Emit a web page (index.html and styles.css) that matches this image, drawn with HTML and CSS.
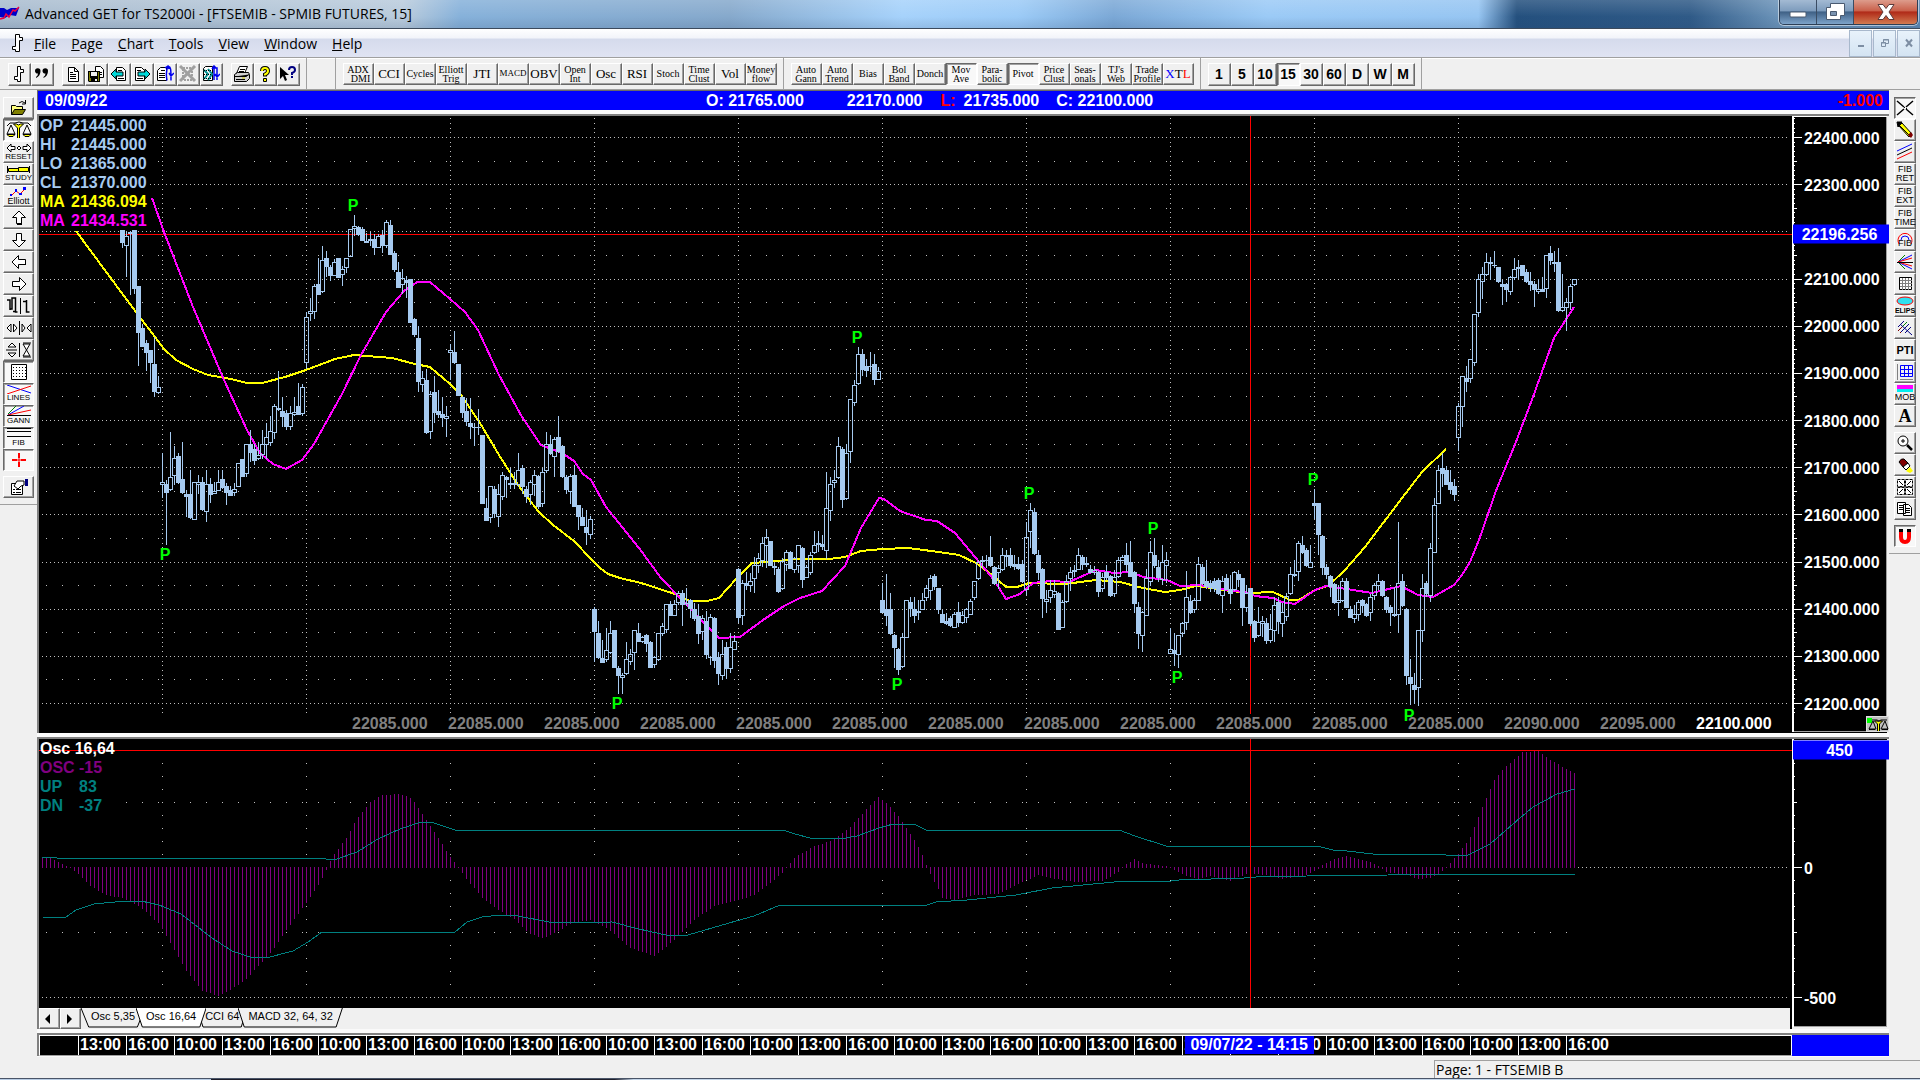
FILE: index.html
```html
<!DOCTYPE html>
<html lang="en">
<head>
    <meta charset="UTF-8">
    <meta name="viewport" content="width=device-width, initial-scale=1.0">
    <title>Advanced GET for TS2000i - [FTSEMIB - SPMIB FUTURES, 15]</title>
    <link rel="stylesheet" href="styles.css">
</head>
<body>
    <header class="titlebar">
        <svg class="app-icon" width="20" height="16" viewBox="0 0 20 16"><path fill="#0000c8" d="M0 2l4 0 3 2 4-2 8 0-3 8-6-1-5 3-5-1z"/><path fill="none" stroke="#f00040" stroke-width="1.500" d="M0 13l4-1 2-4 3 3 4-7 2 1 4-4"/></svg>
        <h1>Advanced GET for TS2000i - [FTSEMIB - SPMIB FUTURES, 15]</h1>
        <div class="window-buttons">
            <button class="win-min" aria-label="Minimize"><svg width="18" height="14" viewBox="0 0 18 14"><rect x="1" y="7" width="16" height="5" rx="1" fill="#fff" stroke="#4a5a70"/></svg></button>
            <button class="win-max" aria-label="Restore"><svg width="20" height="18" viewBox="0 0 20 18"><path fill="#fff" stroke="#4a5a70" d="M5.500.5h14v12h-4v4h-14v-12h4z"/><path fill="#7a93b0" stroke="#4a5a70" d="M5.500 8.500h6v4h-6z"/></svg></button>
            <button class="win-close" aria-label="Close"><svg width="20" height="16" viewBox="0 0 20 16"><path fill="#fff" stroke="#5a3a3a" d="M2 .5h5l3 4 3-4h5l-5 7.500 5 7.500h-5l-3-4-3 4H2l5-7.500z"/></svg></button>
        </div>
    </header>

    <nav class="menubar">
        <svg class="doc-icon" width="12" height="20" viewBox="0 0 12 20"><path fill="#fff" stroke="#000" d="M4.500 1.500h4v3h3v3h-3v11h-4v-2h-3v-3h3z"/></svg>
        <a href="#"><u>F</u>ile</a>
        <a href="#"><u>P</u>age</a>
        <a href="#"><u>C</u>hart</a>
        <a href="#"><u>T</u>ools</a>
        <a href="#"><u>V</u>iew</a>
        <a href="#"><u>W</u>indow</a>
        <a href="#"><u>H</u>elp</a>
        <div class="mdi-buttons">
            <button aria-label="Minimize chart"><svg width="10" height="10" viewBox="0 0 10 10"><path fill="#7d8ea3" d="M2 7h6v2H2z"/></svg></button>
            <button aria-label="Restore chart"><svg width="10" height="10" viewBox="0 0 10 10"><path fill="none" stroke="#7d8ea3" d="M3.500 4V1.500h5v4H6M1.500 4.500h4v4h-4zM3 2h6M1 5h5"/></svg></button>
            <button aria-label="Close chart"><svg width="10" height="10" viewBox="0 0 10 10"><path stroke="#7d8ea3" stroke-width="2" d="M2 1.500l6 7M8 1.500l-6 7"/></svg></button>
        </div>
    </nav>

    <div class="toolbar">
        <div class="group">
            <button class="tool" aria-label="New chart"><svg width="18" height="18" viewBox="0 0 18 18"><path fill="#fff" stroke="#000" d="M7.500 1.500h3v3h3v3h-3v9h-3v-2h-3v-3h3z"/></svg></button>
            <button class="tool" aria-label="Quotes"><svg width="18" height="18" viewBox="0 0 18 18"><path d="M2 6a2.500 2.500 0 1 1 5.500 0q0 5-4.500 7v-1q2-1.500 2-3.500A2.500 2.500 0 0 1 2 6zM9.500 6a2.500 2.500 0 1 1 5.500 0q0 5-4.500 7v-1q2-1.500 2-3.500A2.500 2.500 0 0 1 9.500 6z"/></svg></button>
        </div>
        <div class="group">
            <button class="tool" aria-label="New page"><svg width="18" height="18" viewBox="0 0 18 18"><path fill="#fff" stroke="#000" d="M4.500 2.500h6l4 4v10h-10zM10.500 2.500v4h4"/><path stroke="#000" d="M6 9.500h6M6 11.500h6M6 13.500h6M6 7.500h3"/></svg></button>
            <button class="tool" aria-label="Save page"><svg width="18" height="18" viewBox="0 0 18 18"><path fill="#fff" stroke="#000" d="M8.500 1.500h5l3 3v8h-8z"/><path stroke="#000" d="M12 7.500h3M12 9.500h3"/><path fill="#000" d="M1 6h12v11H2l-1-1z"/><path fill="#808000" d="M2 7h1v6h8V7h1v9h-1v-3H4v3H2z"/><path fill="#f0f0f0" d="M4 7h6v4H4zM8 14h2v2H8z"/></svg></button>
            <button class="tool" aria-label="Previous page"><svg width="18" height="18" viewBox="0 0 18 18"><path fill="#fff" stroke="#000" d="M6.500 2.500h6l3 3v10h-9z"/><path stroke="#000" d="M8 5.500h4M8 13.500h6"/><path fill="#00d8d8" stroke="#000" d="M1 9l5-5v3h7v4H6v3z"/></svg></button>
            <button class="tool" aria-label="Next page"><svg width="18" height="18" viewBox="0 0 18 18"><path fill="#fff" stroke="#000" d="M2.500 2.500h6l3 3v10h-9z"/><path stroke="#000" d="M4 5.500h4M4 13.500h6"/><path fill="#00d8d8" stroke="#000" d="M17 9l-5-5v3H5v4h7v3z"/></svg></button>
            <button class="tool" aria-label="Reload page"><svg width="18" height="18" viewBox="0 0 18 18"><path fill="#fff" stroke="#000" d="M1.500 5.500l3-3h6v13h-9z"/><path stroke="#000" d="M3 8.500h6M3 10.500h6M3 12.500h6M5 5.500h4"/><path fill="none" stroke="#0000f0" stroke-width="1.500" d="M11 15.500c-1-5-1-10 1-14 3 0 3 3 3 14M9 3l3-2 1 3M13 8l2 3 3-3"/></svg></button>
            <button class="tool" aria-label="Delete page" disabled><svg width="18" height="18" viewBox="0 0 18 18"><path fill="none" stroke="#a0a0a0" stroke-width="2" stroke-dasharray="2 1" d="M4 3h9v12H4z"/><path stroke="#a0a0a0" stroke-width="3" d="M1 1l15 15M16 1L1 16"/></svg></button>
            <button class="tool" aria-label="Reload all"><svg width="18" height="18" viewBox="0 0 18 18"><path fill="#fff" stroke="#000" d="M1.500 3.500l2-2h7v14h-9z"/><path fill="none" stroke="#009090" stroke-width="2" d="M2 5l4 4-4 5M6 4l4 5-4 6"/><path stroke="#000" stroke-dasharray="1 1" d="M2 5.500h8M2 9.500h8M2 13.500h8"/><path fill="none" stroke="#0000f0" stroke-width="1.500" d="M12 15V3h3v12M10 4l2-3 2 2M13 9l2 3 3-3"/></svg></button>
        </div>
        <div class="group">
            <button class="tool" aria-label="Print"><svg width="18" height="18" viewBox="0 0 18 18"><path fill="#fff" stroke="#000" d="M6.500 1.500h8l-3 7h-8z"/><path stroke="#000" d="M7 4.500h5M6 6.500h5"/><path fill="#d0d0d0" stroke="#000" d="M1.500 9.500l3-2h11l1 2v4l-3 3h-12z"/><path stroke="#000" d="M2 11.500h11l3-2M3 14.500h9"/><path stroke="#c8c800" d="M9 13h3"/></svg></button>
            <button class="tool" aria-label="Help"><svg width="18" height="18" viewBox="0 0 18 18"><path fill="none" stroke="#000" stroke-width="4" d="M6 6q0-3 3-3t3 3q0 2-3 3.500v2"/><path fill="none" stroke="#ffff00" stroke-width="2" d="M6 6q0-3 3-3t3 3q0 2-3 3.500v1"/><path fill="#ff0" stroke="#000" d="M7.500 13.500h3v3h-3z"/></svg></button>
            <button class="tool" aria-label="Context help"><svg width="18" height="18" viewBox="0 0 18 18"><path d="M1 2v12l3-3 2 5 2-1-2-5h4z"/><path fill="none" stroke="#000080" stroke-width="2" d="M10 5q0-3 3-3t3 3q0 2-3 3v2M13 11v2"/></svg></button>
        </div>
        <div class="group studies">
            <button class="study">ADX<br>&nbsp; DMI</button>
            <button class="study one">CCI</button>
            <button class="study">Cycles</button>
            <button class="study">Elliott<br>Trig</button>
            <button class="study one">JTI</button>
            <button class="study caps">MACD</button>
            <button class="study one">OBV</button>
            <button class="study">Open<br>Int</button>
            <button class="study one">Osc</button>
            <button class="study one">RSI</button>
            <button class="study">Stoch</button>
            <button class="study">Time<br>Clust</button>
            <button class="study one">Vol</button>
            <button class="study">Money<br>flow</button>
        </div>
        <div class="group">
            <button class="study">Auto<br>Gann</button>
            <button class="study">Auto<br>Trend</button>
            <button class="study">Bias</button>
            <button class="study">Bol<br>Band</button>
            <button class="study">Donch</button>
            <button class="study pressed">Mov<br>Ave</button>
            <button class="study">Para-<br>bolic</button>
            <button class="study pressed">Pivot</button>
            <button class="study">Price<br>Clust</button>
            <button class="study">Seas-<br>onals</button>
            <button class="study">TJ's<br>Web</button>
            <button class="study">Trade<br>Profile</button>
            <button class="study one"><span class="blue">X</span>T<span class="red">L</span></button>
        </div>
        <div class="group periods">
            <button class="tool">1</button>
            <button class="tool">5</button>
            <button class="tool">10</button>
            <button class="tool pressed">15</button>
            <button class="tool">30</button>
            <button class="tool">60</button>
            <button class="tool">D</button>
            <button class="tool">W</button>
            <button class="tool">M</button>
        </div>
    </div>

    <main class="workspace">
        <div class="side side-left">
            <button aria-label="Open"><svg width="26" height="18" viewBox="0 0 26 18"><path fill="#ffff80" stroke="#000" d="M5.500 15.500v-9h4l1 1h6v3"/><path fill="#808000" stroke="#000" d="M5.500 15.500l3-5h11l-3 5z"/><path fill="none" stroke="#000" d="M13 4q3-3 6 0M19.500 1v4H16"/></svg></button>
            <button class="pressed" aria-label="Scales"><svg width="26" height="18" viewBox="0 0 26 18"><path fill="none" stroke="#000" d="M1 5l3-3h5l4-1 4 1h5l3 3M5 4l-4 9h8zM21 4l-4 9h8z"/><path fill="#ff0" stroke="#000" d="M11.500 17V7l-4-4h3l2 1 2-1h3l-4 4v10M1 13.500h8l-2 2H3zM17 13.500h8l-2 2h-4z"/></svg></button>
            <button aria-label="Reset"><svg width="26" height="10" viewBox="0 0 26 10"><path fill="#fff" stroke="#000" d="M1 5l4-4v2.500h4v3H5V9zM25 5l-4-4v2.500h-4v3h4V9zM11 5l2-2 2 2-2 2z"/></svg><span>RESET</span></button>
            <button aria-label="Study"><svg width="26" height="9" viewBox="0 0 26 9"><path fill="#ff0" stroke="#000" d="M2.500 3.500h10v3h-10zM12.500 2.500h10v4h-10zM1.500 1v7M23.500 1v7"/></svg><span>STUDY</span></button>
            <button aria-label="Elliott"><svg width="26" height="10" viewBox="0 0 26 10"><path fill="none" stroke="red" d="M5 9l5-5 4 3 5-5"/><path fill="#00f" d="M4 7h2v2H4zM9 2h2v3H9zM13 6h3v2h-3zM17 0h3v3h-3z"/></svg><span class="mixed">Elliott</span></button>
            <button aria-label="Up"><svg width="18" height="18" viewBox="0 0 18 18"><path fill="#fff" stroke="#000" d="M9 2l6.500 6.500h-4v6h-5v-6h-4z"/><path d="M7 14h5v2H7zM11 9h1v6h-1z"/></svg></button>
            <button aria-label="Down"><svg width="18" height="18" viewBox="0 0 18 18"><path fill="#fff" stroke="#000" d="M9 16l6.500-6.500h-4v-7h-5v7h-4z"/><path d="M11 3h1v6h-1z"/></svg></button>
            <button aria-label="Left"><svg width="18" height="18" viewBox="0 0 18 18"><path fill="#fff" stroke="#000" d="M2 9l6.500-6.500v4h7v5h-7v4z"/><path d="M9 11h7v1H9z"/></svg></button>
            <button aria-label="Right"><svg width="18" height="18" viewBox="0 0 18 18"><path fill="#fff" stroke="#000" d="M16 9L9.500 2.500v4h-7v5h7v4z"/><path d="M3 11h7v1H3z"/></svg></button>
            <button aria-label="Bar spacing"><svg width="26" height="18" viewBox="0 0 26 18"><path fill="none" stroke="#000" stroke-width="1.500" d="M1 3h3v9h2v-11h3.500v14h2M4 4v9M7 14.500h3M17 4.500h3M20.500 3v12h3"/><path stroke="#000" d="M14.500 1v16"/></svg></button>
            <button aria-label="Width"><svg width="26" height="18" viewBox="0 0 26 18"><path fill="#fff" stroke="#000" d="M1 9l4-4v8zM11 9L7.500 5v8zM19 9l-3-4v8zM21 9l4-4v8zM13.500 2v14"/></svg></button>
            <button aria-label="Height"><svg width="26" height="18" viewBox="0 0 26 18"><path fill="#fff" stroke="#000" d="M2 6l4-4 4 4zM2 12l4 4 4-4zM0 9h11M13.500 2v14M17 3h7l-7 12h7zM17 2h8M17 16h8"/></svg></button>
            <button class="pressed" aria-label="Grid"><svg width="18" height="16" viewBox="0 0 18 16"><path fill="#fff" stroke="#000" d="M1.500.5h15v15h-15z"/><path stroke="#000" stroke-dasharray="1 2" d="M3 3.500h13M3 6.500h13M3 9.500h13M3 12.500h13"/></svg></button>
            <button class="pressed" aria-label="Lines"><svg width="26" height="9" viewBox="0 0 26 9"><path stroke="#00f" d="M1 0l24 8"/><path stroke="red" d="M1 9L25 1"/></svg><span>LINES</span></button>
            <button class="pressed" aria-label="Gann"><svg width="26" height="11" viewBox="0 0 26 11"><path stroke="green" d="M2 8l8-8"/><path stroke="#00f" d="M2 9l16-9"/><path stroke="red" d="M2 9l23-5"/><path stroke="#000" d="M1 9.500h24"/></svg><span>GANN</span></button>
            <button class="pressed" aria-label="Fib"><svg width="26" height="11" viewBox="0 0 26 11"><path stroke="#000" d="M1 .5h24M1 3.500h24M1 8.500h24"/></svg><span>FIB</span></button>
            <button class="pressed" aria-label="Crosshair"><svg width="18" height="18" viewBox="0 0 18 18"><path stroke="red" stroke-width="2" d="M2 9h5M11 9h5M9 2v5M9 11v5"/><path stroke="red" d="M7 9h4M9 7v4"/></svg></button>
            <hr>
            <button aria-label="Properties"><svg width="20" height="18" viewBox="0 0 20 18"><path fill="#fff" stroke="#000" d="M2.500 5.500h11v11h-11z"/><path stroke="#000" d="M4 11.500h2M7 11.500h5M4 14.500h2M7 14.500h5"/><path fill="#fff" stroke="#000" d="M5 8l3-5h7v4l-3 1-3 3z"/><path fill="#000080" d="M16 1h3v7h-3z"/></svg></button>
        </div>

        <div class="charts">
            <div class="quote">
                <span class="date">09/09/22</span>
                <span>O: 21765.000</span>
                <span class="high">22170.000</span>
                <span class="low"><b class="red">L:</b>21735.000</span>
                <span class="close">C: 22100.000</span>
                <span class="change">-1.000</span>
            </div>

            <section class="panel">
                <div class="plot" id="price-plot">
                    <svg viewBox="39 116 1753 617" preserveAspectRatio="none" shape-rendering="crispEdges"></svg>
                    <dl class="legend">
                        <dt>OP</dt><dd>21445.000</dd>
                        <dt>HI</dt><dd>21445.000</dd>
                        <dt>LO</dt><dd>21365.000</dd>
                        <dt>CL</dt><dd>21370.000</dd>
                        <dt class="yellow">MA</dt><dd class="yellow">21436.094</dd>
                        <dt class="magenta">MA</dt><dd class="magenta">21434.531</dd>
                    </dl>
                </div>
                <div class="axis" id="price-axis">
                    <svg viewBox="0 116 97 617" preserveAspectRatio="none" shape-rendering="crispEdges"></svg>
                    <button class="scale-lock" aria-label="Scale lock"><svg width="22" height="15" viewBox="0 0 22 15"><path fill="#0f0" d="M0 1h5v5H0z"/><path fill="none" stroke="#000" d="M5 3h5l2 1 2-1h6M6 4l-4 8h7zM18 4l-4 8h7z"/><path fill="#ff0" stroke="#000" d="M10.500 14V7l-3-3h3l1 1 1-1h3l-3 3v7M2 12.500h6M15 12.500h6"/></svg></button>
                </div>
            </section>

            <section class="panel">
                <div class="stack">
                    <div class="plot" id="osc-plot">
                        <svg viewBox="39 739 1753 269" preserveAspectRatio="none" shape-rendering="crispEdges"></svg>
                        <dl class="legend osc-legend">
                            <dt class="white wide">Osc 16,64</dt>
                            <dt class="purple">OSC</dt><dd class="purple">-15</dd>
                            <dt class="teal">UP</dt><dd class="teal">83</dd>
                            <dt class="teal">DN</dt><dd class="teal">-37</dd>
                        </dl>
                    </div>
                    <div class="tabs">
                        <button class="scroll" aria-label="Scroll left"><svg width="8" height="10" viewBox="0 0 8 10"><path d="M6 0v10L1 5z"/></svg></button>
                        <button class="scroll" aria-label="Scroll right"><svg width="8" height="10" viewBox="0 0 8 10"><path d="M2 0v10l5-5z"/></svg></button>
                        <button class="tab"><svg viewBox="0 0 100 20" preserveAspectRatio="none"><path d="M0 0l12 19h76L100 0"/></svg>Osc 5,35</button>
                        <button class="tab active"><svg viewBox="0 0 100 20" preserveAspectRatio="none"><path d="M0 0l9 19h82L100 0"/></svg>Osc 16,64</button>
                        <button class="tab short"><svg viewBox="0 0 100 20" preserveAspectRatio="none"><path d="M0 0l12 19h76L100 0"/></svg>CCI 64</button>
                        <button class="tab"><svg viewBox="0 0 100 20" preserveAspectRatio="none"><path d="M0 0l6 19h88L100 0"/></svg>MACD 32, 64, 32</button>
                    </div>
                </div>
                <div class="axis" id="osc-axis">
                    <svg viewBox="0 739 97 290" preserveAspectRatio="none" shape-rendering="crispEdges"></svg>
                </div>
            </section>

            <div class="timebar">
                <div class="times" id="times">
                    <span class="cursor-time">09/07/22 - 14:15</span>
                </div>
                <div class="time-corner"></div>
            </div>
        </div>

        <div class="side side-right">
            <button class="pressed" aria-label="Cross tool"><svg width="18" height="18" viewBox="0 0 18 18"><path stroke="#000" stroke-width="1.500" d="M1 2l7 6M17 2l-7 6M1 16l7-6M17 16l-7-6"/><path d="M8 8h1v1H8zM10 9h1v1h-1z"/></svg></button>
            <button aria-label="Pencil"><svg width="18" height="18" viewBox="0 0 18 18"><path fill="#ff0" stroke="#000" d="M3 5l3-3 10 11-3 3z"/><path d="M1 1h5L2 6zM4 5l9 9" stroke="#000"/><path fill="#800000" d="M12 14l3-3 2 3-2 3z"/></svg></button>
            <button aria-label="Parallel lines"><svg width="18" height="18" viewBox="0 0 18 18"><path stroke="#00f" d="M1 8l15-7"/><path stroke="#000" d="M1 12l15-7"/><path stroke="red" d="M1 16l15-7"/></svg></button>
            <button class="label">FIB<br>RET</button>
            <button class="label">FIB<br>EXT</button>
            <button class="label">FIB<br>TIME</button>
            <button class="label" aria-label="Fib circle"><svg width="18" height="18" viewBox="0 0 18 18"><path fill="none" stroke="red" d="M3 13a7 7 0 1 1 12 0"/><path fill="none" stroke="#00f" d="M5 9a4 4 0 0 1 8 0"/></svg><span class="over">FIB</span></button>
            <button aria-label="Gann fan"><svg width="18" height="18" viewBox="0 0 18 18"><path stroke="green" d="M2 9l7-7M2 9l7 7"/><path stroke="#00f" d="M2 9l14-7M2 9l14 7"/><path stroke="red" d="M2 9l14-4M2 9l14 4"/><path stroke="#000" d="M1 9.500h16"/></svg></button>
            <button aria-label="Gann box"><svg width="18" height="18" viewBox="0 0 18 18"><path fill="#fff" stroke="#000" d="M3.500 2.500h12v12h-12z"/><path stroke="#808080" d="M6.500 3v12M9.500 3v12M12.500 3v12M4 5.500h12M4 8.500h12M4 11.500h12"/></svg></button>
            <button class="label" aria-label="Ellipse"><svg width="18" height="10" viewBox="0 0 18 10"><ellipse cx="9" cy="5" rx="8" ry="4" fill="#30e0f0" stroke="red"/></svg><b>ELIPS</b></button>
            <button aria-label="Pitchfork"><svg width="18" height="18" viewBox="0 0 18 18"><path stroke="#800000" d="M2 12l6-6M4 14l2-2"/><path stroke="green" d="M6 8l5-5"/><path stroke="#000080" d="M8 2l-6 6M13 5l-8 8M4 5l12 11M15 8l-6 6"/></svg></button>
            <button class="pti">PTI</button>
            <button aria-label="Price grid"><svg width="18" height="18" viewBox="0 0 18 18"><path fill="none" stroke="#00f" d="M4.500 2.500h12v11h-12zM8.500 3v11M12.500 3v11M5 6.500h12M5 10.500h12"/><path stroke="#808080" d="M1.500 1v16M4 16.500h13"/></svg></button>
            <button class="label" aria-label="Make or break"><svg width="18" height="8" viewBox="0 0 18 8"><path fill="#f0f" d="M1 0h16v4H1z"/><path fill="#0ee" d="M1 4h16v3H1z"/></svg>MOB</button>
            <button class="text-tool">A</button>
            <hr>
            <button aria-label="Zoom"><svg width="18" height="18" viewBox="0 0 18 18"><circle cx="7" cy="7" r="5" fill="#fff" stroke="#000"/><path stroke="#000" d="M5 7h4M7 5v4"/><path stroke="#000" stroke-width="2.500" d="M11 11l5 5"/></svg></button>
            <button aria-label="Eraser"><svg width="18" height="18" viewBox="0 0 18 18"><path fill="#800000" stroke="#000" d="M3 6q2-4 5-3l4 4-5 4z"/><path fill="#fff" stroke="#000" d="M7 11l5-4 2 3-4 4z"/><path fill="#ff0" d="M10 15l4-4 3 4-3 2z"/></svg></button>
            <button aria-label="Arrange"><svg width="18" height="18" viewBox="0 0 18 18"><path fill="#fff" stroke="#000" stroke-dasharray="3 1" d="M1.500 1.500h7v7h-7zM9.500 1.500h7v7h-7zM1.500 9.500h7v7h-7zM9.500 9.500h7v7h-7z"/><path stroke="#000" d="M3 3l4 4M15 3l-4 4M3 15l4-4M15 15l-4-4"/></svg></button>
            <button aria-label="Copy"><svg width="18" height="18" viewBox="0 0 18 18"><path fill="#fff" stroke="#000" d="M1.500 2.500h8v11h-8zM7.500 4.500h5l3 3v8h-8z"/><path stroke="#000" d="M3 5.500h4M3 7.500h4M3 9.500h4M9 8.500h5M9 10.500h5M9 12.500h5"/></svg></button>
            <hr>
            <button class="pressed" aria-label="Magnet"><svg width="18" height="18" viewBox="0 0 18 18"><path fill="none" stroke="red" stroke-width="4" d="M5 5v5q0 5 4 5t4-5V5"/><path d="M3 2h4v3H3zM11 2h4v3h-4z"/></svg></button>
        </div>
    </main>

    <footer class="statusbar"><span>Page: 1 - FTSEMIB B</span></footer>
    <div class="taskbar"></div>

    <script src="chart.js"></script>
</body>
</html>
```
FILE: styles.css
```css
* {
    box-sizing: border-box;
}

body {
    display: flex;
    flex-direction: column;
    min-height: 100vh;
    margin: 0;
    background: #f0f0f0;
    color: #000;
    font-family: "Liberation Sans", Arial, sans-serif;
}

button {
    display: flex;
    align-items: center;
    justify-content: center;
    margin: 0;
    padding: 0;
    color: #000;
    font-family: inherit;
}

svg {
    display: block;
    flex: none;
}

.red { color: #ff0000; }
.blue { color: #0000ff; }
.white { color: #ffffff; }
.yellow { color: #ffff00; }
.magenta { color: #ff00ff; }
.purple { color: #800080; }
.teal { color: #008080; }

/* title bar */
.titlebar {
    display: flex;
    align-items: center;
    height: 29px;
    border-bottom: 1px solid #3c4a5c;
    background:
        linear-gradient(rgba(255, 255, 255, 0.15), rgba(255, 255, 255, 0) 60%, rgba(40, 70, 110, 0.15)),
        linear-gradient(90deg, #a9bccf 0, #b9cbdc 21%, #86b1da 24%, #86a9cc 38%, #a6d2fb 47%, #9ccbf7 53%, #7ba8d6 58%, #9bcaf6 66%, #96c5f2 77%, #24507e 79%, #2f5a87 88%, #7098bd 93%, #5d88b2 100%);
}

.app-icon {
    margin-right: 5px;
}

.titlebar h1 {
    flex: 1;
    margin: 0;
    font-family: "Open Sans", "Noto Sans", sans-serif;
    font-size: 14px;
    font-weight: normal;
    line-height: 20px;
}

.window-buttons {
    display: flex;
    align-self: flex-start;
    height: 25px;
    margin-right: 2px;
    border: 1px solid #2c3e55;
    border-top: 0;
    border-radius: 0 0 5px 5px;
    box-shadow: 0 0 0 1px rgba(255, 255, 255, 0.5);
    overflow: hidden;
}

.window-buttons button {
    width: 37px;
    border: 0;
    border-right: 1px solid #3a4c63;
    background: linear-gradient(#a3bad3, #7e9cbd 45%, #3f6186 50%, #7da3c9);
}

.window-buttons .win-close {
    width: 63px;
    border-right: 0;
    background: linear-gradient(#dd9c8c, #c9604a 45%, #b02a18 50%, #d27a50);
}

/* menu */
.menubar {
    display: flex;
    align-items: center;
    height: 28px;
    padding-left: 11px;
    background: linear-gradient(#ffffff, #f2f4fa 32%, #d5dbec 36%, #e0e4f3);
    font-family: "Open Sans", "Noto Sans", sans-serif;
    font-size: 14px;
}

.doc-icon {
    margin-right: 11px;
}

.menubar a {
    margin-right: 15px;
    color: #000;
    text-decoration: none;
}

.mdi-buttons {
    display: flex;
    gap: 1px;
    height: 27px;
    margin-left: auto;
}

.mdi-buttons button {
    width: 23px;
    border: 1px solid #a8b8cc;
    background: linear-gradient(#e8f2fb, #d4e4f2);
}

/* top toolbar */
.toolbar {
    display: flex;
    height: 33px;
    padding-left: 8px;
    border-top: 1px solid #a0a0a0;
    border-bottom: 1px solid #a0a0a0;
    box-shadow: inset 0 1px #fff;
}

.group {
    display: flex;
    padding: 5px 8px 0 0;
}

.studies {
    margin-left: 28px;
    border-left: 1px solid #a0a0a0;
}

.group:nth-child(3) {
    padding-right: 6px;
    border-right: 1px solid #a0a0a0;
}

.group:nth-child(n+4) {
    padding-left: 7px;
    padding-right: 6px;
    border-right: 1px solid #a0a0a0;
}

.tool,
.study,
.side button,
.tabs .scroll {
    border: 1px solid;
    border-color: #fff #696969 #696969 #fff;
    background: #f0f0f0;
    box-shadow: inset -1px -1px #a0a0a0;
}

.tool.pressed,
.study.pressed,
.side button.pressed {
    border-color: #696969 #fff #fff #696969;
    background: #f8f8f8;
    box-shadow: inset 1px 1px #a0a0a0;
}

.tool {
    width: 23px;
    height: 23px;
    padding: 0 1px 1px 0;
}

.study {
    width: 31px;
    height: 22px;
    padding: 0 1px 1px 0;
    font-family: "Liberation Serif", "Times New Roman", serif;
    font-size: 10px;
    line-height: 9px;
    white-space: nowrap;
}

.study.one {
    font-size: 13px;
}

.study.caps {
    font-size: 9px;
}

.periods .tool {
    font-size: 14px;
    font-weight: bold;
}

/* workspace */
.workspace {
    display: flex;
    flex: 1;
}

.side {
    display: flex;
    flex-direction: column;
    flex: none;
    align-self: flex-start;
    padding-top: 7px;
    padding-bottom: 6px;
    border-bottom: 1px solid #a0a0a0;
}

.side-left {
    width: 37px;
    padding-left: 3px;
}

.side-right {
    width: 31px;
    padding-left: 5px;
}

.side button {
    position: relative;
    flex-direction: column;
    width: 31px;
    height: 22px;
    padding-bottom: 1px;
    font-size: 8px;
    line-height: 8px;
}

.side-right button {
    width: 22px;
}

.side hr {
    height: 5px;
    margin: 0;
    border: 0;
}

.side button.label {
    font-family: "Liberation Sans Narrow", "Liberation Sans", sans-serif;
    font-size: 9px;
    line-height: 9px;
}

.side button .mixed {
    font-size: 9px;
}

.side button .over {
    position: absolute;
    top: 9px;
}

.side button.label b {
    font-size: 7px;
}

.side button.pti {
    font-size: 11px;
    font-weight: bold;
}

.side button.text-tool {
    font-family: "Liberation Serif", serif;
    font-size: 18px;
    font-weight: bold;
}

.charts {
    display: grid;
    grid-template-rows: 20px 619fr 292fr 23px;
    gap: 4px;
    flex: 1;
    min-width: 0;
    padding-bottom: 1px;
    background: #fafafa;
    font-size: 16px;
    font-weight: bold;
    line-height: 19px;
}

.quote {
    display: flex;
    border-top: 1px solid #696969;
    border-left: 1px solid #696969;
    padding: 0 6px 0 7px;
    background: #0000ff;
    color: #fff;
}

.quote .date {
    flex: 0 0 661px;
}

.quote .high {
    margin-left: 43px;
}

.quote .low {
    margin-left: 18px;
}

.quote .low b {
    margin-right: 8px;
}

.quote .close {
    margin-left: 17px;
}

.quote .change {
    margin-left: auto;
    color: #ff0000;
}

.panel {
    display: flex;
    min-height: 0;
    border-top: 2px solid #808080;
    border-left: 2px solid #808080;
    background: #000;
}

.plot {
    position: relative;
    flex: 1;
    min-width: 0;
    background: #000;
}

.plot > svg,
.axis > svg {
    position: absolute;
    width: 100%;
    height: 100%;
}

.stack {
    display: flex;
    flex: 1;
    flex-direction: column;
    min-width: 0;
}

.legend {
    position: absolute;
    top: 0;
    left: 0;
    display: grid;
    grid-template-columns: 31px 79px;
    margin: 0;
    padding-left: 1px;
    background: #000;
    color: #a6caf0;
}

.legend dd {
    margin: 0;
}

.osc-legend {
    grid-template-columns: 39px 40px;
    background: none;
}

.osc-legend .wide {
    grid-column: span 2;
}

.pivot {
    position: absolute;
    color: #00ff00;
    transform: translate(-50%, -50%);
}

.projection {
    position: absolute;
    bottom: 0;
    color: #808080;
}

.projection.last {
    color: #fff;
}

.axis {
    position: relative;
    flex: 0 0 97px;
    background: #000;
    color: #fff;
}

.axis span {
    position: absolute;
    left: 12px;
    transform: translateY(-50%);
}

.axis .cursor-value {
    left: 1px;
    right: 0;
    padding-right: 3px;
    background: #0000ff;
    text-align: center;
}

.scale-lock {
    position: absolute;
    right: 0;
    bottom: 1px;
    width: 23px;
    height: 16px;
    border: 1px solid #e0e0e0;
    background: #c0c0c0;
}

/* study tabs */
.tabs {
    display: flex;
    height: 21px;
    margin-right: 2px;
    background: #f0f0f0;
    font-size: 11px;
}

.tabs .scroll {
    width: 21px;
    padding-right: 3px;
}

.tab {
    position: relative;
    z-index: 0;
    height: 20px;
    margin-right: -9px;
    padding: 0 10px 5px;
    border: 0;
    background: none;
    font-size: 11px;
}

.tab.short {
    padding: 0 8px 5px;
}

.tab svg {
    position: absolute;
    top: 0;
    left: 0;
    z-index: -1;
    width: 100%;
    height: 100%;
    fill: #f0f0f0;
    stroke: #000;
}

.tab path {
    vector-effect: non-scaling-stroke;
}

.tab.active {
    z-index: 1;
}

.tab.active svg {
    fill: #fff;
}

/* time axis */
.timebar {
    display: flex;
    border-top: 2px solid #808080;
    border-left: 2px solid #808080;
}

.times {
    position: relative;
    display: flex;
    flex: 1;
    min-width: 0;
    padding-left: 38px;
    border: 1px solid #fff;
    border-bottom-color: #a0a0a0;
    background: #000;
    color: #fff;
    line-height: 18px;
    overflow: hidden;
}

.times time {
    flex: 0 0 48px;
    padding-left: 1px;
    border-left: 1px solid #fff;
}

.cursor-time {
    position: absolute;
    top: 0;
    width: 129px;
    background: #0000ff;
    text-align: center;
    white-space: nowrap;
}

.time-corner {
    flex: 0 0 97px;
    background: #0000ff;
}

/* status bar */
.statusbar {
    display: flex;
    justify-content: flex-end;
    height: 21px;
    padding-top: 3px;
    font-family: "Open Sans", "Noto Sans", sans-serif;
    font-size: 14px;
    line-height: 18px;
}

.statusbar span {
    flex: 0 0 486px;
    padding-left: 1px;
    border-top: 1px solid #a0a0a0;
    border-left: 1px solid #a0a0a0;
}

.taskbar {
    height: 2px;
    border-top: 1px solid #4a5568;
    background: linear-gradient(90deg, #b8cce4 11%, #1c1c28 11%, #20202c 32%, #c4d6ea 33%);
}
```
FILE: chart.js
```js
const NS = 'http://www.w3.org/2000/svg';
const SESSION = 36;      // bars per day
const STEP = 4;          // px per bar
const FIRST_DAY = 162;   // x of the first full session

// one row per session, each bar: high open close low (chart y)
const sessions = [
    '230 230 242 248,232 245 236 277,231 233 232 295,230 230 288 294,286 286 332 366,324 328 346 347,340 343 352 371,350 350 362 383,337 364 391 397,376 392 387 394',
    '453 484 482 498,480 484 492 545,432 489 477 491,446 475 458 485,453 456 482 484,442 479 492 494,490 494 496 517,470 494 517 519,482 519 482 520,475 484 482 494,477 482 509 511,470 511 484 522,478 484 494 503,482 493 491 494,470 490 482 491,470 479 487 489,483 486 492 505,486 490 495 496,483 492 489 496,463 486 463 487,459 459 476 477,444 473 444 477,430 444 452 462,444 449 460 465,442 458 455 460,430 454 444 459,423 444 437 459,416 442 431 446,404 432 406 439,371 409 408 411,397 411 416 427,410 413 426 430,406 426 413 430,397 414 412 416,383 406 414 415,384 413 387 416',
    '312 362 317 369,298 313 311 321,284 311 286 319,258 284 294 295,246 291 260 293,251 258 266 277,265 267 275 281,259 275 262 276,258 258 277 278,266 274 269 286,258 267 258 273,229 256 229 257,215 228 226 236,226 227 234 236,227 229 240 241,233 242 241 243,232 239 240 246,234 239 247 255,234 247 236 248,230 235 245 253,220 245 222 248,220 225 254 255,251 253 269 272,262 272 287 288,269 284 278 294,276 280 282 298,279 279 322 323,318 319 334 337,326 338 381 392,371 384 378 392,369 380 432 434,391 431 394 439,376 392 412 423,390 411 414 418,397 414 417 427,406 418 416 437',
    '344 352 350 380,331 352 362 364,364 364 395 396,396 397 412 418,398 411 421 426,398 423 426 439,423 427 427 446,409 427 427 435,435 435 503 504,498 508 520 521,486 517 486 523,486 489 513 518,484 516 494 527,472 496 475 500,476 477 479 498,468 484 483 489,472 484 483 489,453 484 470 487,465 468 486 494,486 489 496 503,480 494 482 505,470 484 475 496,475 476 506 509,468 503 472 507,432 470 444 473,435 444 453 455,437 456 439 477,416 437 451 453,445 446 476 478,475 477 489 494,474 491 476 504,465 475 506 507,505 505 516 530,508 517 525 526,510 527 532 545,516 534 519 539',
    '607 609 631 662,621 633 657 659,640 658 662 663,628 659 650 662,621 652 633 654,630 630 667 668,666 668 675 694,673 677 675 694,642 673 659 675,649 661 654 665,630 652 630 670,623 633 641 641,636 641 637 643,634 635 643 652,641 642 667 668,656 664 657 668,633 659 633 661,623 633 626 636,604 629 604 633,601 604 615 616,600 615 604 616,591 602 593 605,590 593 604 626,588 603 603 606,599 600 608 618,603 609 618 621,604 616 633 644,615 631 618 640,611 621 654 659,614 657 617 665,617 618 660 668,652 657 673 685,640 675 654 680,642 647 668 679,633 668 647 673,635 649 641 650',
    '568 569 617 623,580 615 583 625,572 583 585 590,573 585 581 592,557 578 565 593,553 565 558 573,537 560 543 567,529 545 537 568,541 541 565 566,563 566 567 575,567 569 591 593,558 588 561 590,550 564 552 571,551 552 568 569,557 569 558 573,545 565 545 573,547 548 579 588,565 577 567 578,552 572 555 575,531 552 545 554,531 544 543 552,535 544 546 550,472 550 508 559,477 510 484 521,470 482 480 488,437 477 446 479,447 449 499 508,444 498 453 500,399 451 399 463,380 402 385 406,347 383 354 385,350 354 369 376,359 366 370 377,352 366 366 372,354 364 379 385,367 379 371 380',
    '583 600 612 613,574 609 615 626,593 609 633 635,634 635 647 668,648 649 669 675,633 666 637 668,600 637 600 638,597 602 608 617,597 609 615 623,600 612 611 620,593 609 600 610,585 597 588 601,575 590 578 600,574 576 586 590,588 588 609 614,610 614 622 623,613 621 623 625,616 618 625 627,612 627 614 627,602 612 622 627,611 622 615 624,608 617 609 623,599 614 601 615,581 597 581 600,560 578 562 580,556 561 560 568,555 560 560 568,536 557 565 567,566 567 583 585,565 572 568 589,548 569 555 571,550 556 555 567,548 555 565 568,555 564 566 570,557 564 568 570,560 564 581 583',
    '522 589 537 595,503 531 510 548,508 512 553 555,550 555 572 580,568 569 598 618,590 601 599 613,580 597 590 603,580 594 591 598,592 593 629 630,600 627 602 628,575 601 581 603,567 578 572 591,565 571 570 577,548 569 555 570,555 557 564 570,557 564 563 567,565 569 572 573,566 572 570 575,571 572 591 597,573 588 577 592,565 572 577 580,575 576 595 597,570 593 577 597,557 576 560 578,555 560 557 561,543 555 564 572,541 562 576 577,571 572 603 613,602 607 633 649,611 635 612 652,569 615 578 616,541 581 552 586,538 555 565 568,560 567 577 582,545 579 562 585,552 565 560 583',
    '628 653 649 654,633 650 653 666,635 654 635 668,622 633 623 637,571 622 597 630,595 601 612 614,598 609 600 613,557 600 564 601,564 567 583 585,560 581 586 589,580 583 587 592,578 581 588 592,578 580 593 595,576 595 581 613,574 578 589 590,575 589 593 604,571 589 572 591,570 574 579 587,578 578 607 626,585 607 593 612,588 588 623 626,620 621 637 642,607 635 622 637,616 623 621 637,618 623 640 644,614 640 629 643,597 630 605 642,597 602 621 634,603 623 612 637,593 616 596 621,567 593 574 595,560 575 574 577,541 571 543 581,536 545 552 554,548 550 565 567,545 567 562 568',
    '489 503 505 519,503 503 534 555,535 536 567 575,564 567 574 579,575 576 586 597,583 584 602 604,585 602 600 616,578 600 581 602,578 581 607 608,606 609 617 618,605 618 614 623,600 614 602 621,599 600 605 613,603 604 615 617,594 612 597 621,583 595 585 600,574 585 581 590,580 581 595 597,596 597 609 613,605 607 612 626,587 615 614 617,522 614 583 633,574 581 605 607,608 609 675 685,659 677 683 705,673 685 689 704,630 687 630 706,574 630 588 642,581 583 593 597,543 595 548 602,498 552 505 553,465 503 470 504,453 468 473 487,466 470 484 485,470 482 489 494,479 486 494 501',
    '403 437 406 451,376 406 376 427,366 378 381 392,359 378 359 383,314 362 314 366,274 312 279 317,267 281 274 299,253 274 262 276,257 263 262 280,251 265 265 268,267 267 281 283,280 284 286 305,283 284 289 302,276 291 277 295,258 277 269 280,260 268 267 279,265 265 275 276,269 272 281 283,272 281 284 291,281 284 289 307,279 291 289 294,277 289 291 292,255 288 255 298,246 253 260 265,251 263 262 272,248 262 310 312,274 310 307 312,298 307 302 331,284 302 286 310,279 284 279 286'
];

const slowMA = '76,231 124,296 139,316 155,337 164,349 176,360 193,369 208,375 231,379 247,383 262,383 285,377 306,370 335,359 354,355 392,358 415,364 430,367 450,384 461,395 480,423 499,455 518,485 538,511 553,525 574,541 591,559 600,568 608,574 620,578 641,583 675,594 690,601 707,601 719,598 737,578 752,563 780,561 794,559 829,559 845,557 861,551 882,549 908,548 939,552 959,555 976,563 992,575 1006,587 1017,587 1029,583 1065,584 1096,580 1120,582 1143,588 1165,592 1180,590 1196,586 1212,588 1223,590 1250,593 1273,592 1290,600 1299,600 1315,590 1328,586 1345,570 1365,547 1399,502 1422,472 1446,449';
const fastMA = '152,198 164,232 193,307 224,380 247,430 260,453 273,464 286,469 302,460 314,444 342,394 361,355 386,312 404,291 417,282 430,282 450,299 465,312 478,330 499,375 522,417 541,445 562,453 574,461 583,474 591,480 606,507 639,548 661,578 682,600 706,625 719,638 740,637 763,620 784,606 800,598 822,591 832,580 845,566 861,528 879,498 884,499 900,511 926,520 937,521 955,533 975,557 994,580 1006,599 1020,594 1033,583 1051,581 1069,582 1096,570 1114,573 1131,572 1143,577 1167,580 1180,586 1200,585 1220,589 1250,593 1255,596 1273,598 1282,602 1295,604 1315,590 1326,586 1353,590 1372,593 1401,586 1418,595 1433,597 1454,585 1462,575 1470,562 1479,540 1497,488 1514,447 1533,397 1554,338 1574,307';
const pivots = [[353, 205], [165, 554], [617, 703], [857, 337], [897, 684], [1029, 493], [1153, 528], [1177, 677], [1313, 479], [1409, 715]];

const oscillator = '42,858 50,858 66,866 71,867 78,873 90,885 103,893 125,898 139,905 159,923 170,942 186,970 202,990 219,995 230,989 246,978 259,964 273,949 286,929 306,902 319,882 323,875 327,867 334,854 346,838 357,818 370,802 382,795 398,794 411,798 422,814 438,838 451,859 458,867 467,879 482,897 496,908 514,918 529,933 543,937 556,931 572,922 591,919 607,927 630,947 654,955 668,944 679,934 694,919 714,905 736,900 754,894 771,881 783,871 786,867 795,857 814,846 830,841 848,829 871,804 878,797 886,803 899,817 910,834 920,850 926,865 930,873 938,888 942,897 954,899 975,894 999,893 1018,883 1038,874 1056,878 1075,881 1103,880 1118,871 1123,866 1134,859 1142,863 1163,866 1170,867 1183,874 1197,878 1212,875 1230,880 1248,872 1265,874 1283,878 1305,874 1315,870 1320,866 1334,859 1348,856 1367,861 1378,866 1388,872 1402,873 1419,878 1431,877 1442,870 1446,867 1458,854 1470,837 1483,805 1494,780 1502,770 1522,752 1538,751 1549,759 1575,774';
const upperBand = '42,857 56,857 57,858 324,858 326,859 337,859 357,852 378,839 400,829 421,822 431,822 443,826 455,830 783,830 795,834 810,838 830,839 846,838 857,836 879,828 893,824 914,824 926,830 1119,830 1135,836 1166,846 1317,846 1333,850 1347,851 1373,854 1444,854 1446,855 1468,855 1490,844 1513,824 1533,807 1557,794 1575,789';
const lowerBand = '43,917 66,917 76,910 94,904 125,901 141,901 159,905 181,914 212,938 232,951 250,957 266,958 293,951 308,942 322,932 455,932 467,922 482,917 500,915 518,916 549,922 567,923 612,922 639,929 670,936 688,935 736,921 754,916 780,905 927,905 936,902 967,900 1016,895 1052,888 1114,882 1118,881 1171,881 1179,880 1244,878 1256,877 1307,876 1388,875 1575,874';

const priceY = p => 137.5 + (22400 - p) * 0.4717;
const oscY = v => 867.5 - v * 0.26;

function add(svg, tag, attrs) {
    const el = document.createElementNS(NS, tag);
    for (const key in attrs) el.setAttribute(key, attrs[key]);
    svg.appendChild(el);
    return el;
}

function label(parent, text, className, style) {
    const el = document.createElement('span');
    el.textContent = text;
    el.className = className;
    Object.assign(el.style, style);
    parent.appendChild(el);
}

const parse = text => text.split(' ').map(p => p.split(',').map(Number));
const dot = (x, y) => `M${x} ${Math.floor(y)}h1v1h-1z`;

function rowDots(y, from, to, gap) {
    let d = '';
    for (let x = from; x <= to; x += gap) d += dot(x, y);
    return d;
}

function verticals(top, bottom, gap) {
    let d = '';
    for (let x = FIRST_DAY; x <= 1458; x += SESSION * STEP) {
        for (let y = top; y < bottom; y += gap) d += dot(x, y);
    }
    return d;
}

function line(svg, points, color, width) {
    add(svg, 'polyline', { points, fill: 'none', stroke: color, 'stroke-width': width });
}

function drawPrice() {
    const plot = document.getElementById('price-plot');
    const svg = plot.querySelector('svg');

    let grid = verticals(priceY(22440), 716, 4.717);
    for (let p = 22400; p >= 21200; p -= 100) {
        grid += rowDots(priceY(p), 42, 1788, 4);
        if (p > 21200) grid += rowDots(priceY(p - 50), 46, 1566, 16);
    }
    add(svg, 'path', { d: grid, fill: '#c0c0c0' });

    add(svg, 'path', { d: 'M39 234h1753v1H39z', fill: '#ff0000' });
    add(svg, 'path', { d: 'M1250 116h1v598h-1z', fill: '#ff0000' });
    line(svg, slowMA, '#ffff00', 2);
    line(svg, fastMA, '#ff00ff', 2);

    let hollow = '', solid = '';
    sessions.forEach((row, day) => {
        const bars = row.split(',');
        // the first session is cut off on the left
        const start = day === 0 ? FIRST_DAY - bars.length * STEP : FIRST_DAY + (day - 1) * SESSION * STEP;
        bars.forEach((bar, i) => {
            const [high, open, close, low] = bar.split(' ').map(Number);
            const x = start + i * STEP;
            const top = Math.min(open, close);
            const bottom = Math.max(open, close);
            solid += `M${x} ${high}h1V${top}h-1zM${x} ${bottom}h1V${low}h-1z`;
            if (close > open || bottom - top < 2) {
                solid += `M${x - 2} ${top}h5V${bottom + 1}h-5z`;
            } else {
                hollow += `M${x - 1.5} ${top + 0.5}h4V${bottom + 0.5}h-4z`;
            }
        });
    });
    add(svg, 'path', { d: solid, fill: '#a6caf0' });
    add(svg, 'path', { d: hollow, fill: 'none', stroke: '#a6caf0' });

    const left = x => (x - 39) / 1753 * 100 + '%';
    pivots.forEach(([x, y]) => label(plot, 'P', 'pivot', { left: left(x), top: (y - 116) / 617 * 100 + '%' }));
    for (let i = 0; i < 15; i++) {
        const value = 22085 + Math.max(0, i - 11) * 5;
        label(plot, value + '.000', i === 14 ? 'projection last' : 'projection', { left: left(352 + i * 96) });
    }

    const axis = document.getElementById('price-axis');
    const scale = axis.querySelector('svg');
    let ticks = 'M0 116h2v616h-2zM0 116h95v1H0z';
    for (let p = 22440; p >= 21180; p -= 10) {
        const size = p % 100 === 0 ? 10 : p % 50 === 0 ? 5 : 3;
        ticks += `M0 ${Math.floor(priceY(p))}h${size}v1H0z`;
        if (p % 100 === 0 && p !== 22200) {
            label(axis, p + '.000', '', { top: (priceY(p) - 116) / 617 * 100 + '%' });
        }
    }
    add(scale, 'path', { d: ticks, fill: '#fff' });
    add(scale, 'path', { d: 'M94 117h1v615h-1zM2 731h93v1H2z', fill: '#a0a0a0' });
    add(scale, 'path', { d: 'M95 116h2v617h-2z', fill: '#f0f0f0' });
    label(axis, '22196.256', 'cursor-value', { top: 118 / 617 * 100 + '%' });
}

function drawOscillator() {
    const svg = document.querySelector('#osc-plot svg');

    let grid = verticals(oscY(450), 990, 13);
    grid += rowDots(oscY(0), 42, 1788, 4) + rowDots(oscY(-500), 42, 1788, 4);
    grid += rowDots(oscY(250), 126, 1566, 16) + rowDots(oscY(-250), 46, 1566, 16);
    add(svg, 'path', { d: grid, fill: '#c0c0c0' });

    const curve = parse(oscillator);
    let bars = '';
    for (let x = 42, i = 0; x <= 1574; x += STEP) {
        while (curve[i + 1][0] < x) i++;
        const [x0, y0] = curve[i];
        const [x1, y1] = curve[i + 1];
        const y = Math.round(y0 + (y1 - y0) * (x - x0) / (x1 - x0));
        bars += y < 867 ? `M${x} ${y}h1V868h-1z` : `M${x} 867h1V${y + 1}h-1z`;
    }
    add(svg, 'path', { d: bars, fill: '#800080' });
    line(svg, upperBand, '#008080', 1);
    line(svg, lowerBand, '#008080', 1);
    add(svg, 'path', { d: 'M39 750h1753v1H39z', fill: '#ff0000' });
    add(svg, 'path', { d: 'M1250 739h1v269h-1z', fill: '#ff0000' });

    const axis = document.getElementById('osc-axis');
    const scale = axis.querySelector('svg');
    let ticks = 'M0 739h2v288h-2zM0 740h95v1H0z';
    for (let v = 450; v >= -500; v -= 50) {
        const size = v % 500 === 0 ? 10 : v % 250 === 0 ? 5 : 3;
        ticks += `M0 ${Math.floor(oscY(v))}h${size}v1H0z`;
    }
    add(scale, 'path', { d: ticks, fill: '#fff' });
    add(scale, 'path', { d: 'M94 741h1v286h-1zM2 1026h93v1H2z', fill: '#a0a0a0' });
    add(scale, 'path', { d: 'M95 739h2v290h-2zM0 1027h97v2H0z', fill: '#f0f0f0' });
    [0, -500].forEach(v => label(axis, v, '', { top: (oscY(v) - 739) / 290 * 100 + '%' }));
    label(axis, '450', 'cursor-value', { top: 11 / 290 * 100 + '%' });
}

function drawTimes() {
    const times = document.getElementById('times');
    const cursor = times.querySelector('.cursor-time');
    for (let i = 0; i < 32; i++) {
        const cell = document.createElement('time');
        cell.textContent = ['13:00', '16:00', '10:00'][i % 3];
        times.insertBefore(cell, cursor);
    }
    cursor.style.left = 1146 / 1753 * 100 + '%';
}

drawPrice();
drawOscillator();
drawTimes();
```
